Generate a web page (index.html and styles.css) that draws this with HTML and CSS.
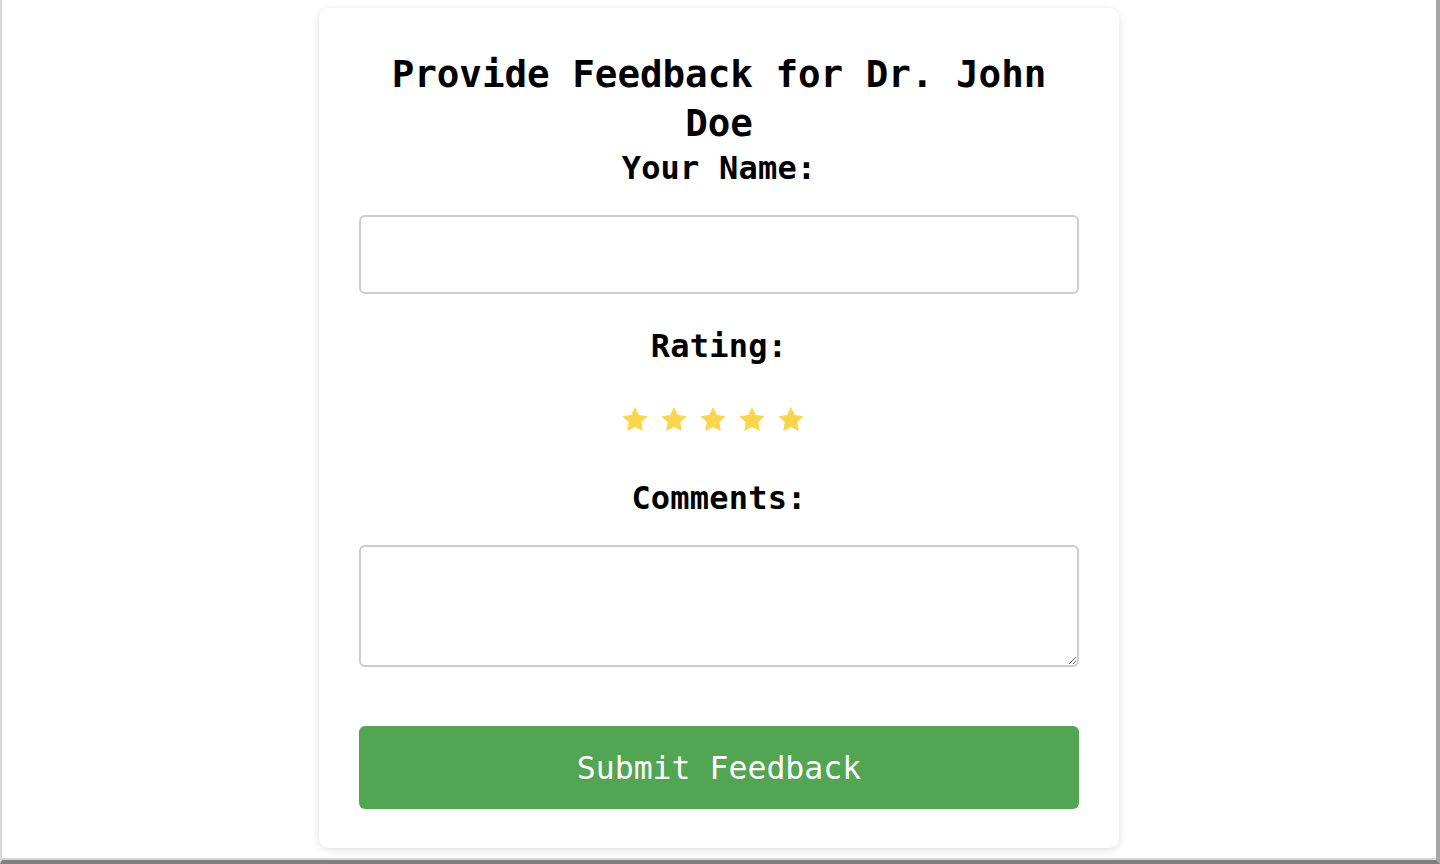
FILE: index.html
```html
<!DOCTYPE html>
<html lang="en">
<head>
<meta charset="utf-8">
<title>Provide Feedback</title>
<link rel="stylesheet" href="styles.css">
</head>
<body>
<div class="frame">
  <div class="card">
    <h1 class="title">Provide Feedback for Dr. John Doe</h1>
    <form class="form">
      <label class="label label-name" for="name">Your Name:</label>
      <input class="field field-name" id="name" type="text">
      <label class="label label-rating">Rating:</label>
      <div class="stars">
        <svg class="star" viewBox="2 2 20 19.02"><polygon points="12,2 15.09,8.26 22,9.27 17,14.14 18.18,21.02 12,17.77 5.82,21.02 7,14.14 2,9.27 8.91,8.26"/></svg>
        <svg class="star" viewBox="2 2 20 19.02"><polygon points="12,2 15.09,8.26 22,9.27 17,14.14 18.18,21.02 12,17.77 5.82,21.02 7,14.14 2,9.27 8.91,8.26"/></svg>
        <svg class="star" viewBox="2 2 20 19.02"><polygon points="12,2 15.09,8.26 22,9.27 17,14.14 18.18,21.02 12,17.77 5.82,21.02 7,14.14 2,9.27 8.91,8.26"/></svg>
        <svg class="star" viewBox="2 2 20 19.02"><polygon points="12,2 15.09,8.26 22,9.27 17,14.14 18.18,21.02 12,17.77 5.82,21.02 7,14.14 2,9.27 8.91,8.26"/></svg>
        <svg class="star" viewBox="2 2 20 19.02"><polygon points="12,2 15.09,8.26 22,9.27 17,14.14 18.18,21.02 12,17.77 5.82,21.02 7,14.14 2,9.27 8.91,8.26"/></svg>
      </div>
      <label class="label label-comments" for="comments">Comments:</label>
      <textarea class="field field-comments" id="comments"></textarea>
      <button class="submit" type="button">Submit Feedback</button>
    </form>
  </div>
</div>
</body>
</html>
```
FILE: styles.css
```css
html, body {
  margin: 0;
  padding: 0;
  background: #ffffff;
}

body {
  font-family: "DejaVu Sans Mono", "Liberation Mono", monospace;
  color: #000;
}

.frame {
  box-sizing: border-box;
  height: 864px;
  padding-top: 8px;
  border-left: 2px solid #d8d8d8;
  border-right: 4px solid #a8a8a8;
  border-bottom: 4px solid #808080;
  box-shadow: inset 0 -2px 0 #d4d4d4;
  display: flex;
  flex-direction: column;
  align-items: center;
  overflow: hidden;
}

.card {
  box-sizing: border-box;
  width: 800px;
  height: 840px;
  padding: 42px 40px 39px;
  background: #fff;
  border-radius: 10px;
  box-shadow: 0 2px 10px rgba(0, 0, 0, 0.12);
  text-align: center;
}

.title {
  margin: 0;
  font-size: 37.5px;
  line-height: 49px;
  font-weight: bold;
}

.form {
  display: flex;
  flex-direction: column;
  align-items: center;
}

.label {
  display: block;
  font-size: 32px;
  line-height: 37px;
  font-weight: bold;
  letter-spacing: 0.2px;
}

.label-name { margin-top: 2px; }
.label-rating { margin-top: 34px; }
.label-comments { margin-top: 49px; }

.field {
  box-sizing: border-box;
  width: 720px;
  border: 2px solid #cccccc;
  border-radius: 6px;
  background: #fff;
  font-family: inherit;
  font-size: 20px;
  padding: 10px;
  outline: none;
}

.field-name {
  margin-top: 28px;
  height: 79px;
}

.field-comments {
  margin-top: 28px;
  height: 122px;
  resize: vertical;
  display: block;
}

.stars {
  margin-top: 42px;
  padding-right: 12px;
  display: flex;
  gap: 13px;
  height: 24px;
}

.star {
  width: 26px;
  height: 24px;
  fill: #fbd64a;
  display: block;
}

.submit {
  margin-top: 59px;
  width: 720px;
  height: 83px;
  border: none;
  border-radius: 6px;
  background: #52a552;
  color: #fff;
  font-family: inherit;
  font-size: 31.5px;
  padding: 0;
  cursor: pointer;
}
```
